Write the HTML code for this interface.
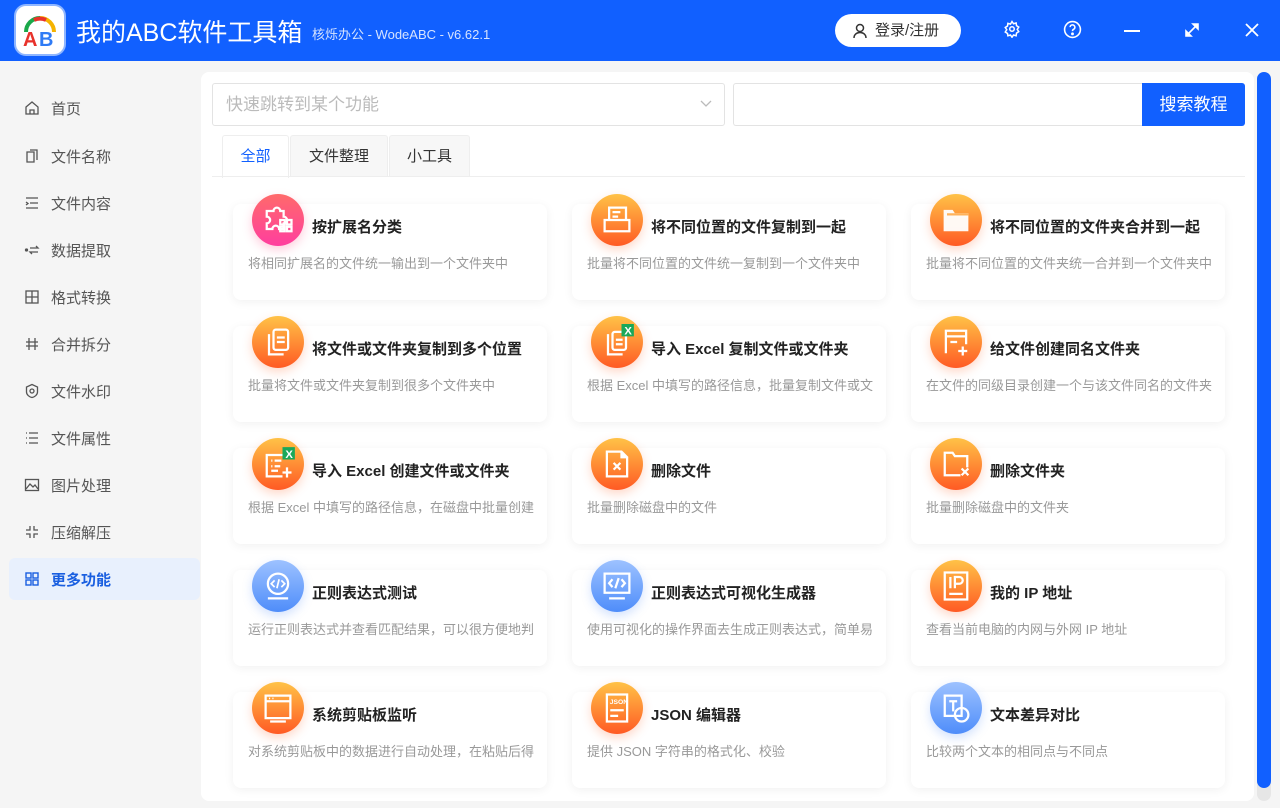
<!DOCTYPE html>
<html><head><meta charset="utf-8">
<style>
*{box-sizing:border-box;margin:0;padding:0}
body{width:1280px;height:808px;overflow:hidden;background:#f5f5f5;font-family:"Liberation Sans","Noto Sans CJK SC",sans-serif;position:relative}
.hdr{position:absolute;left:0;top:0;width:1280px;height:61px;background:#1160ff}
.logo{position:absolute;left:14px;top:4px;width:52px;height:52px;border-radius:12px;background:#fff;border:2px solid #8fb6ff}
.ttl{position:absolute;left:76px;top:13px;color:#fff;font-size:25px;letter-spacing:0}
.sub{position:absolute;left:312px;top:24px;color:#d6e3ff;font-size:13px}
.login{position:absolute;left:835px;top:14px;width:126px;height:33px;border-radius:17px;background:#fff;color:#333;font-size:15px;line-height:33px;padding-left:40px}
.hi{position:absolute;top:20px}
.si{position:absolute;left:24px;height:20px;font-size:15px;color:#555;display:flex;align-items:center}
.si svg{margin-right:11px}
.act{position:absolute;left:9px;top:558px;width:191px;height:42px;border-radius:6px;background:#e8f0fd}
.panel{position:absolute;left:201px;top:72px;width:1053px;height:729px;background:#fff;border-radius:8px}
.sel{position:absolute;left:212px;top:83px;width:513px;height:43px;border:1px solid #e3e3e3;border-radius:3px;color:#bbb;font-size:17px;line-height:42px;padding-left:13px}
.inp{position:absolute;left:733px;top:83px;width:412px;height:43px;border:1px solid #e3e3e3;border-right:none;border-radius:3px 0 0 3px}
.btn{position:absolute;left:1142px;top:83px;width:103px;height:43px;background:#1160ff;color:#fff;font-size:17px;line-height:43px;text-align:center;border-radius:0 3px 3px 0}
.tab{position:absolute;top:135px;height:42px;border:1px solid #eee;border-bottom:none;background:#f7f7f7;font-size:15px;color:#333;line-height:42px;text-align:center;border-radius:3px 3px 0 0}
.tline{position:absolute;left:212px;top:176px;width:1033px;height:1px;background:#eee}
.card{position:absolute;width:314px;height:96px;background:#fff;border-radius:8px;box-shadow:0 2px 10px rgba(0,0,0,.06)}
.ic{position:absolute;left:19px;top:-10px;width:52px;height:52px;border-radius:50%;display:flex;align-items:center;justify-content:center}
.ic svg{width:36px;height:36px}
.o{background:linear-gradient(#ffc247,#ff5a24);box-shadow:0 4px 10px rgba(255,100,40,.25)}
.p{background:linear-gradient(#ff6a6a,#ff3e9e);box-shadow:0 4px 10px rgba(255,60,120,.25)}
.b{background:linear-gradient(#9dc2ff,#4f8dfa);box-shadow:0 4px 10px rgba(80,140,250,.25)}
.ct{position:absolute;left:79px;top:12px;font-size:15px;font-weight:bold;color:#222;white-space:nowrap}
.cd{position:absolute;left:15px;top:49px;width:286px;font-size:13px;color:#999;white-space:nowrap;overflow:hidden}
.sb{position:absolute;left:1257px;top:72px;width:14px;height:729px;border-radius:7px;background:#e6e6e6}
.th{position:absolute;left:1257px;top:72px;width:14px;height:716px;border-radius:7px;background:#1160ff}
</style></head><body>
<div class="hdr">
 <div class="logo"><svg width="48" height="48" viewBox="0 0 48 48"><path d="M10 26 A14 14 0 0 1 24 12" stroke="#1aa84a" stroke-width="4" fill="none"/><path d="M24 12 A14 14 0 0 1 38 26" stroke="#f5b300" stroke-width="4" fill="none"/><path d="M18 14 A14 14 0 0 1 30 14" stroke="#e8322b" stroke-width="4" fill="none"/><text x="7" y="40" font-size="20" font-weight="bold" fill="#e8322b" font-family="Liberation Sans">A</text><text x="23" y="40" font-size="20" font-weight="bold" fill="#2f7bf5" font-family="Liberation Sans">B</text></svg></div>
 <div class="ttl">我的ABC软件工具箱</div>
 <div class="sub">核烁办公 - WodeABC - v6.62.1</div>
 <div class="login"><svg style="position:absolute;left:17px;top:9px" width="16" height="16" viewBox="0 0 16 16" fill="none" stroke="#333" stroke-width="1.5"><circle cx="8" cy="5" r="3.5"/><path d="M2 15c0-3.5 2.7-5.5 6-5.5s6 2 6 5.5"/></svg>登录/注册</div>
 <svg class="hi" style="left:1003px" width="18" height="18" viewBox="0 0 24 24" fill="none" stroke="#fff" stroke-width="2"><circle cx="12" cy="12" r="3"/><path d="M12 2l2 3 3.5-1 .5 3.5 3 2-2 3 2 3-3 2-.5 3.5-3.5-1-2 3-2-3-3.5 1L6 18l-3-2 2-3-2-3 3-2 .5-3.5 3.5 1z"/></svg>
 <svg class="hi" style="left:1063px" width="19" height="19" viewBox="0 0 24 24" fill="none" stroke="#fff" stroke-width="2"><circle cx="12" cy="12" r="10"/><path d="M9 9a3 3 0 1 1 4 3c-1 .5-1 1-1 2"/><circle cx="12" cy="17.5" r=".8" fill="#fff"/></svg>
 <div style="position:absolute;left:1124px;top:30px;width:16px;height:2px;background:#fff"></div>
 <svg class="hi" style="left:1184px;top:22px" width="16" height="16" viewBox="0 0 16 16" stroke="#fff" stroke-width="1.6" fill="#fff"><path d="M3 13L13 3"/><path d="M9 2h5v5z"/><path d="M2 9v5h5z"/></svg>
 <svg class="hi" style="left:1244px;top:22px" width="16" height="16" viewBox="0 0 16 16" stroke="#fff" stroke-width="1.8"><path d="M2 2l12 12M14 2L2 14"/></svg>
</div>
<div class="act"></div>
<div class="si" style="top:98px"><svg width="16" height="16" viewBox="0 0 16 16" fill="none" stroke="#555" stroke-width="1.3"><path d="M2 7l6-5 6 5v7H2z"/><path d="M6 14v-4h4v4"/></svg>首页</div>
<div class="si" style="top:146px"><svg width="16" height="16" viewBox="0 0 16 16" fill="none" stroke="#555" stroke-width="1.3"><path d="M3 4h7v10H3z"/><path d="M6 2h7v10"/></svg>文件名称</div>
<div class="si" style="top:193px"><svg width="16" height="16" viewBox="0 0 16 16" fill="none" stroke="#555" stroke-width="1.3"><path d="M2 3h12M6 8h8M2 13h12M2 7l2 1.5L2 10"/></svg>文件内容</div>
<div class="si" style="top:240px"><svg width="16" height="16" viewBox="0 0 16 16" fill="none" stroke="#555" stroke-width="1.3"><circle cx="2.5" cy="8" r="1" fill="#555"/><path d="M6 6h8l-2-2M14 10H6l2 2"/></svg>数据提取</div>
<div class="si" style="top:287px"><svg width="16" height="16" viewBox="0 0 16 16" fill="none" stroke="#555" stroke-width="1.3"><rect x="2" y="2" width="12" height="12"/><path d="M8 2v12M2 8h12"/></svg>格式转换</div>
<div class="si" style="top:334px"><svg width="16" height="16" viewBox="0 0 16 16" fill="none" stroke="#555" stroke-width="1.3"><path d="M5 2v12M11 2v12M2 6h12M2 10h12"/></svg>合并拆分</div>
<div class="si" style="top:381px"><svg width="16" height="16" viewBox="0 0 16 16" fill="none" stroke="#555" stroke-width="1.3"><path d="M8 1.5l5.5 2.5v5c0 3-3 5-5.5 5.5C5.5 14 2.5 12 2.5 9V4z"/><circle cx="8" cy="8" r="2"/></svg>文件水印</div>
<div class="si" style="top:428px"><svg width="16" height="16" viewBox="0 0 16 16" fill="none" stroke="#555" stroke-width="1.3"><path d="M5 3h9M5 8h9M5 13h9M2 3h1M2 8h1M2 13h1"/></svg>文件属性</div>
<div class="si" style="top:475px"><svg width="16" height="16" viewBox="0 0 16 16" fill="none" stroke="#555" stroke-width="1.3"><rect x="1.5" y="2.5" width="13" height="11"/><path d="M2 12l4-5 3 3 2-2 3 4"/></svg>图片处理</div>
<div class="si" style="top:522px"><svg width="16" height="16" viewBox="0 0 16 16" fill="none" stroke="#555" stroke-width="1.3"><path d="M6 2v4H2M10 2v4h4M6 14v-4H2M10 14v-4h4"/></svg>压缩解压</div>
<div class="si" style="top:569px;color:#1a5fe0;font-weight:bold"><svg width="16" height="16" viewBox="0 0 16 16" fill="none" stroke="#1a5fe0" stroke-width="1.4"><rect x="2" y="2" width="5" height="5"/><rect x="9" y="2" width="5" height="5"/><rect x="2" y="9" width="5" height="5"/><rect x="9" y="9" width="5" height="5"/></svg>更多功能</div>

<div class="panel"></div>
<div class="sel">快速跳转到某个功能<svg style="position:absolute;right:12px;top:16px" width="12" height="8" viewBox="0 0 12 8" fill="none" stroke="#bbb" stroke-width="1.3"><path d="M1 1l5 5 5-5"/></svg></div>
<div class="inp"></div>
<div class="btn">搜索教程</div>
<div class="tab" style="left:222px;width:67px;background:#fff;color:#1160ff;height:43px">全部</div>
<div class="tab" style="left:290px;width:98px">文件整理</div>
<div class="tab" style="left:389px;width:81px">小工具</div>
<div class="tline"></div>

<div class="card" style="left:233px;top:204px"><div class="ic p"><svg viewBox="0 0 32 32" fill="none" stroke="#fff" stroke-width="2"><path d="M6 8h6a3 3 0 0 1 6 0h3v5a3 3 0 0 1 0 6v5h-4a3 3 0 0 0-6 0H6v-5a3 3 0 0 0 0-6z"/><rect x="18" y="16" width="4" height="4"/><rect x="24" y="16" width="4" height="4"/><rect x="18" y="22" width="4" height="4"/><rect x="24" y="22" width="4" height="4"/></svg></div><div class="ct">按扩展名分类</div><div class="cd">将相同扩展名的文件统一输出到一个文件夹中</div></div>
<div class="card" style="left:572px;top:204px"><div class="ic o"><svg viewBox="0 0 32 32" fill="none" stroke="#fff" stroke-width="2"><path d="M9 16V5h15v11"/><path d="M12 9h7M12 13h5"/><path d="M5 16h22v10H5z"/></svg></div><div class="ct">将不同位置的文件复制到一起</div><div class="cd">批量将不同位置的文件统一复制到一个文件夹中</div></div>
<div class="card" style="left:911px;top:204px"><div class="ic o"><svg viewBox="0 0 32 32" fill="#fff"><path d="M5 7h8l2 3h12v16H5z" opacity=".95"/><path d="M8 10h19v2H8z" fill="#ffb25a"/></svg></div><div class="ct">将不同位置的文件夹合并到一起</div><div class="cd">批量将不同位置的文件夹统一合并到一个文件夹中</div></div>
<div class="card" style="left:233px;top:326px"><div class="ic o"><svg viewBox="0 0 32 32" fill="none" stroke="#fff" stroke-width="2"><path d="M8 9v18h13"/><rect x="12" y="5" width="13" height="18" rx="2"/><path d="M15 12h7M15 16h7"/></svg></div><div class="ct">将文件或文件夹复制到多个位置</div><div class="cd">批量将文件或文件夹复制到很多个文件夹中</div></div>
<div class="card" style="left:572px;top:326px"><div class="ic o"><svg viewBox="0 0 32 32" fill="none" stroke="#fff" stroke-width="2"><path d="M8 9v18h13"/><rect x="12" y="7" width="12" height="16" rx="2"/><path d="M15 14h6M15 18h6"/><rect x="20" y="0" width="11" height="11" fill="#1aa85a" stroke="none"/><text x="22.5" y="9.5" font-size="10" font-weight="bold" fill="#fff" stroke="none" font-family="Liberation Sans">X</text></svg></div><div class="ct">导入 Excel 复制文件或文件夹</div><div class="cd">根据 Excel 中填写的路径信息，批量复制文件或文件夹</div></div>
<div class="card" style="left:911px;top:326px"><div class="ic o"><svg viewBox="0 0 32 32" fill="none" stroke="#fff" stroke-width="2"><path d="M7 26V6h18v12"/><path d="M7 11h18M11 16h6"/><path d="M22 20v8M18 24h8"/></svg></div><div class="ct">给文件创建同名文件夹</div><div class="cd">在文件的同级目录创建一个与该文件同名的文件夹</div></div>
<div class="card" style="left:233px;top:448px"><div class="ic o"><svg viewBox="0 0 32 32" fill="none" stroke="#fff" stroke-width="2"><path d="M20 27H6V8h14"/><path d="M10 13h1M13 13h6M10 18h1M13 18h5M10 22h6"/><path d="M24 19v9M20 23.5h8"/><rect x="20" y="1" width="11" height="11" fill="#1aa85a" stroke="none"/><text x="22.5" y="10.5" font-size="10" font-weight="bold" fill="#fff" stroke="none" font-family="Liberation Sans">X</text></svg></div><div class="ct">导入 Excel 创建文件或文件夹</div><div class="cd">根据 Excel 中填写的路径信息，在磁盘中批量创建文件</div></div>
<div class="card" style="left:572px;top:448px"><div class="ic o"><svg viewBox="0 0 32 32" fill="none" stroke="#fff" stroke-width="2"><path d="M7 5h13l5 5v17H7z"/><path d="M20 5v5h5" fill="#fff"/><path d="M13 15l6 6M19 15l-6 6"/></svg></div><div class="ct">删除文件</div><div class="cd">批量删除磁盘中的文件</div></div>
<div class="card" style="left:911px;top:448px"><div class="ic o"><svg viewBox="0 0 32 32" fill="none" stroke="#fff" stroke-width="2"><path d="M20 26H6V6h7l2 3h11v10"/><path d="M21 20l6 6M27 20l-6 6"/></svg></div><div class="ct">删除文件夹</div><div class="cd">批量删除磁盘中的文件夹</div></div>
<div class="card" style="left:233px;top:570px"><div class="ic b"><svg viewBox="0 0 32 32" fill="none" stroke="#fff" stroke-width="2"><circle cx="16" cy="14" r="9"/><path d="M13 11l-3 3 3 3M19 11l3 3-3 3M17 10l-2 8" stroke-width="1.5"/><path d="M7 27h18"/></svg></div><div class="ct">正则表达式测试</div><div class="cd">运行正则表达式并查看匹配结果，可以很方便地判断</div></div>
<div class="card" style="left:572px;top:570px"><div class="ic b"><svg viewBox="0 0 32 32" fill="none" stroke="#fff" stroke-width="2"><rect x="5" y="5" width="22" height="17"/><path d="M12 10l-3 3.5 3 3.5M20 10l3 3.5-3 3.5M17.5 9l-3 9"/><path d="M9 27h14"/></svg></div><div class="ct">正则表达式可视化生成器</div><div class="cd">使用可视化的操作界面去生成正则表达式，简单易用</div></div>
<div class="card" style="left:911px;top:570px"><div class="ic o"><svg viewBox="0 0 32 32" fill="none" stroke="#fff" stroke-width="2"><rect x="6" y="4" width="20" height="24"/><path d="M11 8v10M15 18V8h4a3 3 0 0 1 0 6h-4M10 23h12"/></svg></div><div class="ct">我的 IP 地址</div><div class="cd">查看当前电脑的内网与外网 IP 地址</div></div>
<div class="card" style="left:233px;top:692px"><div class="ic o"><svg viewBox="0 0 32 32" fill="none" stroke="#fff" stroke-width="2"><rect x="5" y="5" width="22" height="20"/><path d="M5 10h22"/><path d="M8 7.5h1M11 7.5h1" stroke-width="1.5"/><path d="M9 28h14"/></svg></div><div class="ct">系统剪贴板监听</div><div class="cd">对系统剪贴板中的数据进行自动处理，在粘贴后得到</div></div>
<div class="card" style="left:572px;top:692px"><div class="ic o"><svg viewBox="0 0 32 32" fill="none" stroke="#fff" stroke-width="2"><rect x="7" y="4" width="18" height="24"/><text x="9.5" y="12.5" font-size="6" font-weight="bold" fill="#fff" stroke="none" font-family="Liberation Sans">JSON</text><path d="M10 18h12M10 23h7"/></svg></div><div class="ct">JSON 编辑器</div><div class="cd">提供 JSON 字符串的格式化、校验</div></div>
<div class="card" style="left:911px;top:692px"><div class="ic b"><svg viewBox="0 0 32 32" fill="none" stroke="#fff" stroke-width="2"><rect x="6" y="5" width="15" height="18"/><path d="M10 10h7M13.5 10v9"/><circle cx="21" cy="22" r="6"/></svg></div><div class="ct">文本差异对比</div><div class="cd">比较两个文本的相同点与不同点</div></div>

<div class="sb"></div><div class="th"></div>
</body></html>
